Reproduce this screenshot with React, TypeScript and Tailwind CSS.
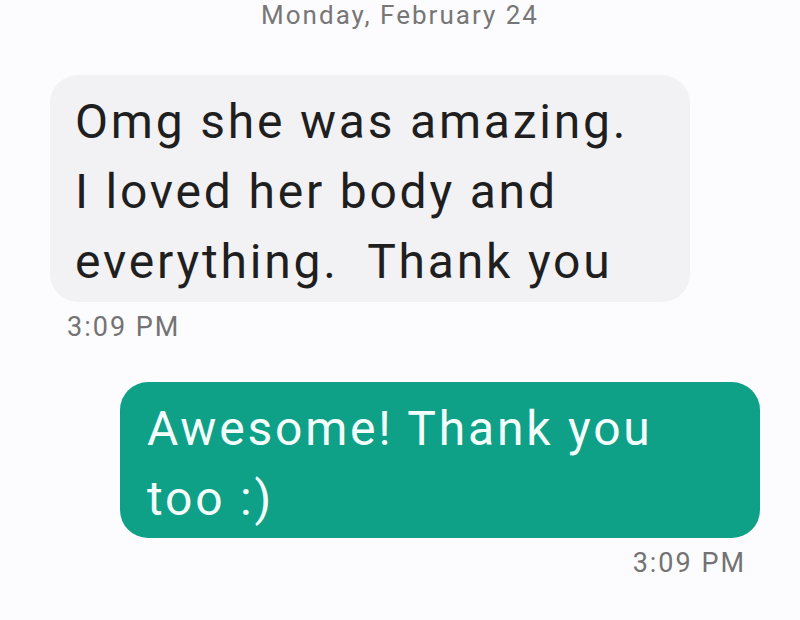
import React from 'react';

type Msg = {
    id: number;
    text: string[];
    time: string;
    outgoing: boolean;
};

const messages: Msg[] = [
    {
        id: 1,
        text: ['Omg she was amazing.', 'I loved her body and', 'everything.\u00a0 Thank you'],
        time: '3:09 PM',
        outgoing: false,
    },
    {
        id: 2,
        text: ['Awesome! Thank you', 'too :)'],
        time: '3:09 PM',
        outgoing: true,
    },
];

function Bubble({ msg }: { msg: Msg }) {
    if (msg.outgoing) {
        return (
            <div className="flex flex-col items-end pr-[40px]">
                <div className="w-[640px] rounded-[28px] bg-[#0fa088] pl-[27px] pr-6 pt-3 pb-1 text-[48px] leading-[70px] tracking-[2.8px] text-[#f4fffc]">
                    {msg.text.map((line, i) => (
                        <div key={i}>{line}</div>
                    ))}
                </div>
                <div className="mt-[9px] mr-[14px] text-[27px] leading-[32px] tracking-[2px] text-[#737373]">
                    {msg.time}
                </div>
            </div>
        );
    }

    return (
        <div className="flex flex-col items-start pl-[50px]">
            <div className="w-[640px] rounded-[28px] bg-[#f2f2f4] pl-[25px] pr-6 pt-3 pb-[5px] text-[48px] leading-[70px] tracking-[2.8px] text-[#1f1f1f]">
                {msg.text.map((line, i) => (
                    <div key={i} className="whitespace-pre">{line}</div>
                ))}
            </div>
            <div className="mt-[9px] ml-[17px] text-[27px] leading-[32px] tracking-[2px] text-[#737373]">
                {msg.time}
            </div>
        </div>
    );
}

export default function App() {
    return (
        <div className="w-[800px] h-[620px] overflow-hidden bg-[#fcfcfe] font-['Roboto',sans-serif]">
            <div className="text-center text-[26px] leading-[30px] tracking-[2px] text-[#777777]">
                Monday, February 24
            </div>
            <div className="mt-[45px] flex flex-col gap-[39px]">
                {messages.map(m => (
                    <Bubble key={m.id} msg={m} />
                ))}
            </div>
        </div>
    );
}
